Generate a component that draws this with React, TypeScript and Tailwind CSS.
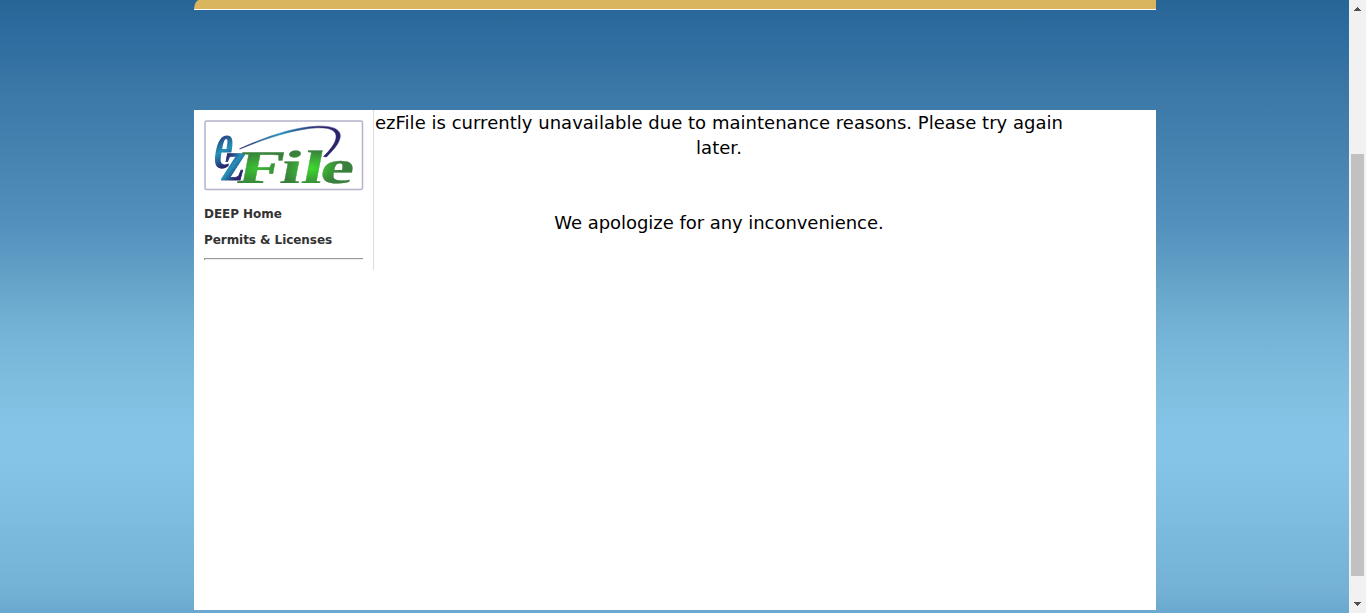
import React from "react";

function Logo() {
  return (
    <svg className="overflow-visible" width="160" height="70" viewBox="0 0 160 70" role="img" aria-label="ezFile">
      <defs>
        <linearGradient id="ink" x1="0" y1="0" x2="1" y2="0">
          <stop offset="0" stopColor="#29236b" />
          <stop offset="0.4" stopColor="#2492b8" />
          <stop offset="0.8" stopColor="#29236b" />
        </linearGradient>
        <linearGradient id="inkE" gradientUnits="userSpaceOnUse" x1="3" y1="-14" x2="8" y2="0">
          <stop offset="0" stopColor="#29407e" />
          <stop offset="0.5" stopColor="#2492b8" />
          <stop offset="1" stopColor="#29236b" />
        </linearGradient>
        <linearGradient id="inkZ" gradientUnits="userSpaceOnUse" x1="1" y1="-12" x2="12" y2="-4">
          <stop offset="0" stopColor="#29236b" />
          <stop offset="0.5" stopColor="#2492b8" />
          <stop offset="1" stopColor="#29236b" />
        </linearGradient>
        <radialGradient id="leafA" gradientUnits="userSpaceOnUse" cx="11" cy="-14" r="17">
          <stop offset="0" stopColor="#3ac034" />
          <stop offset="1" stopColor="#39803c" />
        </radialGradient>
        <radialGradient id="leafB" gradientUnits="userSpaceOnUse" cx="46" cy="-14" r="18">
          <stop offset="0" stopColor="#3ed92f" />
          <stop offset="1" stopColor="#39803c" />
        </radialGradient>
      </defs>
      <rect x="1" y="1" width="157.5" height="68.5" rx="1.5" fill="#fff" stroke="#b4b3ca" strokeWidth="1.5" />
      <path
        d="M35.5 28.8C63 16 91 7 113 6.2C130 5.5 138 10 136 18C134.5 25 128 31 122.5 37L119.5 36.5C126 30 131 24 132 18C133 11 127 7.3 113 7.8C92 9 64 17.5 36.5 28.8Z"
        fill="url(#ink)"
        stroke="url(#ink)"
        strokeWidth="0.5"
      />
      <g fontFamily="'Liberation Serif', serif">
        <text transform="translate(7.5 47.8) skewX(-10) scale(1.36 2.3)" fontSize="30" fill="url(#inkE)">e</text>
        <text transform="translate(16.5 59.6) skewX(-11) scale(1.6 1.9)" fontSize="30" fill="url(#inkZ)" stroke="url(#inkZ)" strokeWidth="0.5">z</text>
        <g transform="translate(31.5 62.5) skewX(-11) scale(1.6 1)" fontSize="47" strokeWidth="0.25">
          <text fill="url(#leafA)" stroke="url(#leafA)">F</text>
          <text x="27 40.5 51.8" fill="url(#leafB)" stroke="url(#leafB)">ile</text>
        </g>
      </g>
    </svg>
  );
}

function Scrollbar() {
  return (
    <div className="flex w-[17px] shrink-0 flex-col items-center bg-[#f1f1f1]">
      <svg width="17" height="17" shapeRendering="crispEdges" fill="#505050">
        <path d="M8 7h1v1h1v1h1v1h1v1H5v-1h1V9h1V8h1z" />
      </svg>
      <div className="mt-[137px] h-[422px] w-[13px] bg-[#c1c1c1]" />
      <svg className="mt-auto" width="17" height="17" shapeRendering="crispEdges" fill="#505050">
        <path d="M5 6h7v1h-1v1h-1v1H9v1H8V9H7V8H6V7H5z" />
      </svg>
    </div>
  );
}

export default function App() {
  return (
    <div className="flex h-[613px] w-[1366px] overflow-hidden font-['DejaVu_Sans',Verdana,sans-serif]">
      <div className="flex-1 bg-[linear-gradient(to_bottom,#286597_0px,#306da0_42px,#3b78a7_90px,#4581af_145px,#508dba_209px,#5592be_231px,#65a2c8_279px,#77b5d8_340px,#80bee0_387px,#85c4e6_430px,#85c4e6_458px,#7ebddf_516px,#78b6da_557px,#74b1d5_590px,#6ba8cf_613px)]">
        <div className="ml-[194px] flex h-full w-[962px] flex-col">
          <div className="h-[10px] shrink-0 rounded-tl-[5px_10px] border-b border-white bg-[#d9b55d]" />
          <main className="mt-[100px] flex h-[500px] items-start bg-white">
            <nav className="h-[160px] w-[180px] shrink-0 border-r border-[#dcdce0] pt-[10px] pl-[10px] text-[12px] font-bold tracking-[-0.06px] text-[#333]">
              <Logo />
              <a className="mt-[11px] block h-[26px] leading-[26px]">DEEP Home</a>
              <a className="block h-[26px] leading-[26px]">Permits &amp; Licenses</a>
              <div className="mt-[5px] h-[2px] w-[159px] border-t border-l border-[#999] bg-[#eee]" />
            </nav>
            <div className="w-[690px] text-center text-[18px] leading-[25px] text-black">
              <p className="whitespace-nowrap tracking-[0.025px]">
                ezFile is currently unavailable due to maintenance reasons. Please try again
                <br />
                later.
              </p>
              <p className="mt-[50px] tracking-[-0.05px]">We apologize for any inconvenience.</p>
            </div>
          </main>
        </div>
      </div>
      <Scrollbar />
    </div>
  );
}
